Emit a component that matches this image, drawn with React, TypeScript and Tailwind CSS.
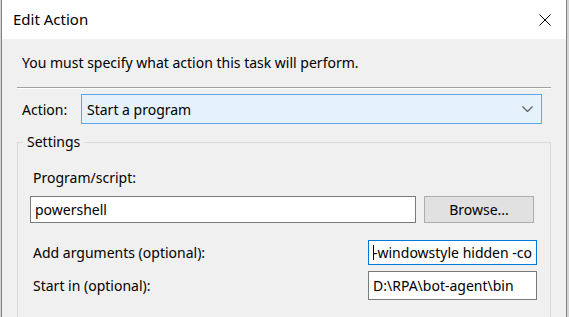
import React from "react";

const font = { fontFamily: '"Segoe UI", "Noto Sans", "Liberation Sans", sans-serif' };

function Field({ value, focused, caret, className }: { value: string; focused?: boolean; caret?: boolean; className: string }) {
  return (
    <div
      className={`flex h-[25px] items-center bg-white pl-[4px] text-[14px] leading-none text-black overflow-hidden whitespace-nowrap border ${
        focused ? "border-[#0078d7]" : "border-[#7a7a7a]"
      } ${className}`}
    >
      {caret && <span className="mr-[-1px] inline-block h-[15px] w-px bg-black" />}
      {value}
    </div>
  );
}

export default function App() {
  return (
    <div className="flex h-[317px] w-[569px] overflow-hidden bg-[#d4d4d4]" style={font}>
      <div className="ml-px flex w-[566px] flex-col border-x border-[#7f7f7f] bg-[#f0f0f0]">
        {/* title bar */}
        <div className="flex h-[39px] shrink-0 items-center justify-between bg-white pl-[11px] pr-[14px]">
          <span className="text-[15px] text-black">Edit Action</span>
          <svg width="12" height="12" viewBox="0 0 12 12" className="mr-[1px]">
            <path d="M0.5 0.5L11.5 11.5M11.5 0.5L0.5 11.5" stroke="#000" strokeWidth="1" />
          </svg>
        </div>

        <div className="flex flex-col px-[15px]">
          <p className="mt-[14px] pl-[5px] text-[14px] leading-[20px] text-black">
            You must specify what action this task will perform.
          </p>

          <div className="mt-[14px] h-[2px] w-[534px] border-t border-b border-t-[#a0a0a0] border-b-white" />

          <div className="mt-[5px] flex items-center">
            <span className="w-[64px] pl-[5px] text-[14px] text-black">Action:</span>
            <div className="flex h-[30px] w-[461px] items-center justify-between border border-[#5ea6e8] bg-[#e5f1fb] pl-[5px] pr-[8px]">
              <span className="text-[14px] text-black">Start a program</span>
              <svg width="11" height="6" viewBox="0 0 11 6">
                <path d="M0.5 0.5L5.5 5.5L10.5 0.5" fill="none" stroke="#606060" strokeWidth="1.3" />
              </svg>
            </div>
          </div>

          <fieldset className="mt-[8px] h-[200px] w-[534px] border border-[#dcdcdc] px-[12px]">
            <legend className="ml-[-7px] px-[4px] text-[14px] leading-[20px] text-black">Settings</legend>

            <div className="mt-[16px] pl-[3px] text-[14px] leading-[20px] text-black">Program/script:</div>
            <div className="mt-[8px] flex items-center">
              <Field value="powershell" className="w-[386px] h-[27px]" />
              <button className="ml-[8px] h-[27px] w-[110px] border border-[#adadad] bg-[#e1e1e1] text-[14px] text-black">
                Browse...
              </button>
            </div>

            <div className="mt-[17px] flex items-center justify-between">
              <span className="pl-[3px] text-[14px] text-black">Add arguments (optional):</span>
              <Field value="-windowstyle hidden -co" focused caret className="mr-[1px] w-[169px]" />
            </div>

            <div className="mt-[6px] flex items-center justify-between">
              <span className="pl-[3px] text-[14px] text-black">Start in (optional):</span>
              <Field value="D:\RPA\bot-agent\bin" className="mr-[1px] h-[29px] w-[169px]" />
            </div>
          </fieldset>
        </div>
      </div>
    </div>
  );
}
